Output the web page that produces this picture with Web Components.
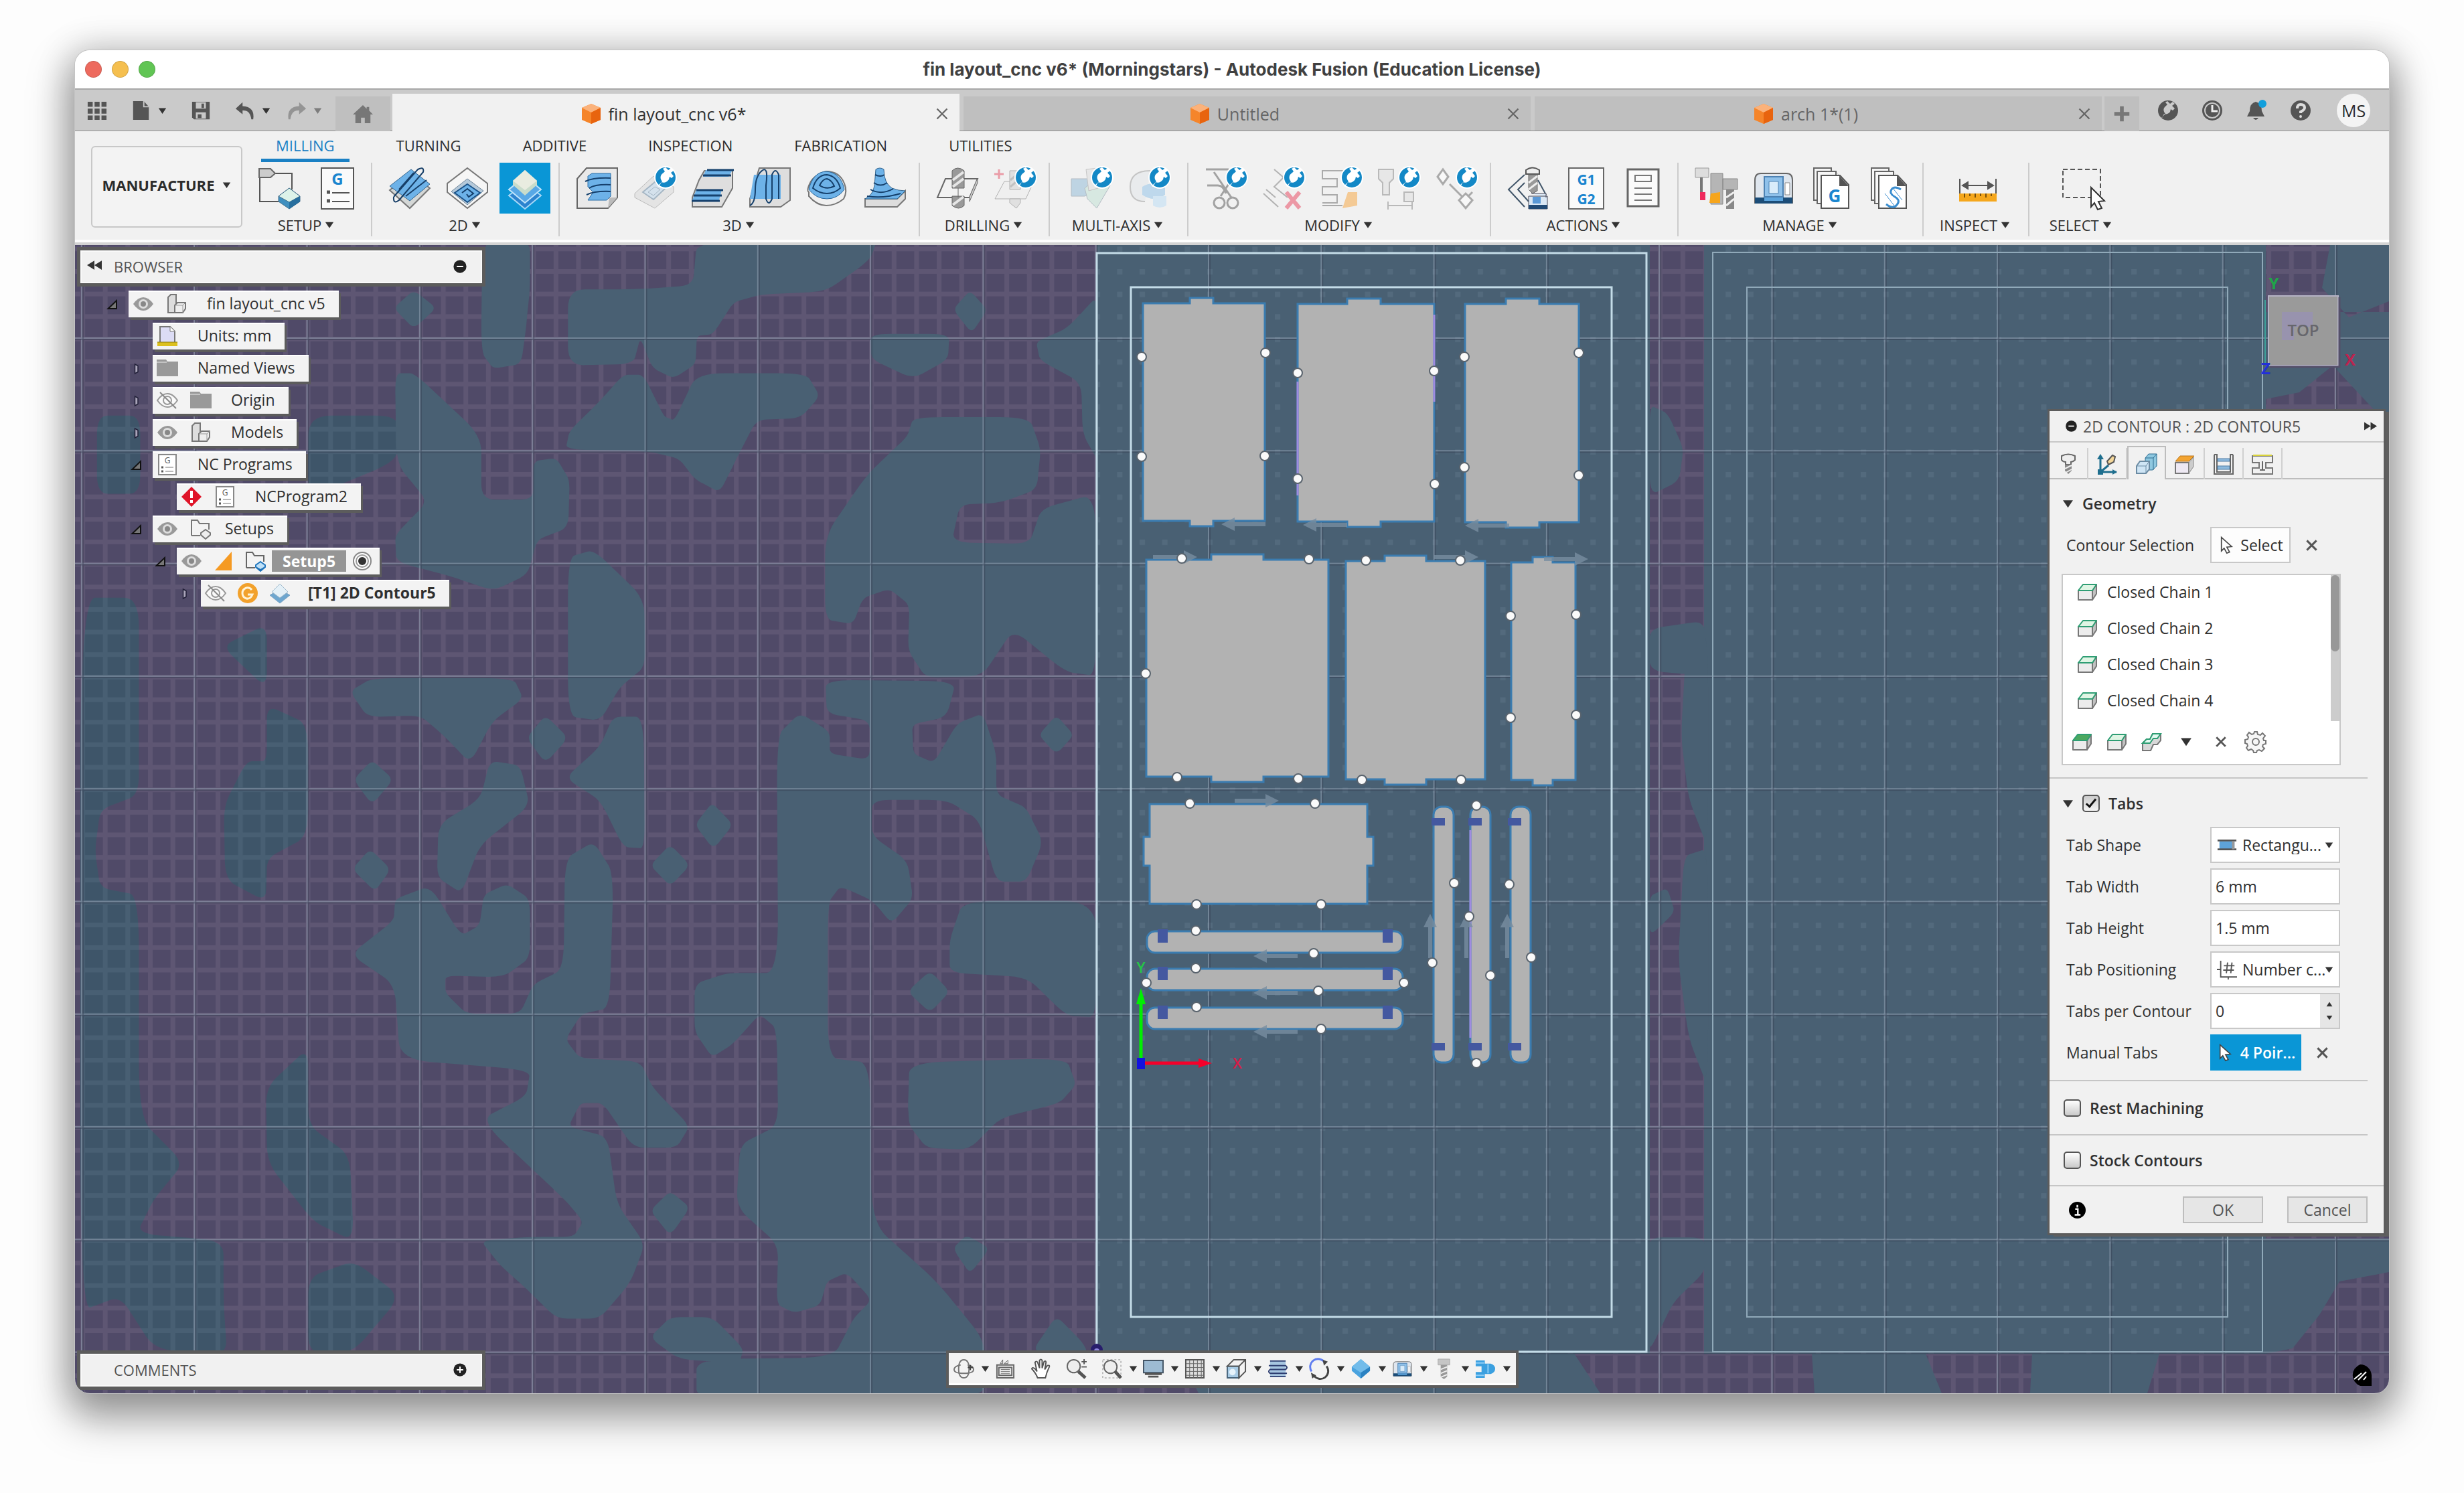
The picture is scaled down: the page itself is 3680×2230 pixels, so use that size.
<!DOCTYPE html>
<html lang="en">
<head>
<meta charset="utf-8">
<title>fin layout_cnc v6* (Morningstars) - Autodesk Fusion (Education License)</title>
<style>
    html, body {
        margin: 0;
        height: 100%;
    }
    body {
        background: #fdfdfd;
        font: 22px/28px "Open Sans", "Noto Sans", sans-serif;
        color: #2c2c2c;
    }
</style>
</head>
<body>
<fusion-app></fusion-app>

<script>
// the round plug badge that marks extension tools
const BADGE = `
    <circle cx="48" cy="16" r="17" fill="#fff"/>
    <circle cx="48" cy="16" r="15" fill="#1388c6"/>
    <path d="M36 29l7-7c-4-5-3-10 2-13l2-2-3-4 4-2 4 4 5-3 3 4-4 3 4 5-3 3-3-2-1 4c-3 4-7 6-11 4l-4 7z" fill="#fff"/>`;

const BOX = (top, body) => `
    <path d="M3 14h21v14H3z" fill="${body}" stroke="#777" stroke-width="2" stroke-linejoin="round"/>
    <path d="M24 14l6-9v14l-6 9z" fill="#c2c2c2" stroke="#777" stroke-width="2" stroke-linejoin="round"/>
    <path d="M3 14l7-9h20l-6 9z" fill="${top}" stroke="#2f9e74" stroke-width="2" stroke-linejoin="round"/>`;

const MACHINE = `
    <path d="M4 20q0-10 9-10h38q9 0 9 10v34H4z" fill="#dfe6ee" stroke="#666" stroke-width="2"/>
    <path d="M18 15h28v30H18z" fill="#8fc1ea" stroke="#4d82b3" stroke-width="2"/>
    <path d="M25 22h14v18H25z" fill="#d9ecfa" stroke="#4d82b3"/>
    <path d="M49 24h7v18h-7z" fill="#fff" stroke="#888"/>
    <path d="M4 46h56v9H4z" fill="#1c4d78"/>
    <path d="M18 46h28v5H18z" fill="#5ca4dd"/>`;

const PAGES = `
    <path d="M6 2h26v48H6z" fill="#f7f7f7" stroke="#666" stroke-width="2"/>
    <path d="M11 7h28v48H11z" fill="#f7f7f7" stroke="#666" stroke-width="2"/>
    <path d="M17 13h28l13 14v35H17z" fill="#fff" stroke="#555" stroke-width="2"/>
    <path d="M34 2l24 27H44V13z" fill="#555"/>`;

// name: [viewBox size, markup]
const ICONS = {
    setup: [64, `<path d="M14 10h36v24M2 14v38h28" fill="none" stroke="#555" stroke-width="2"/>
        <path d="M1 3h17l7 7-7 6H1z" fill="#ccc" stroke="#666" stroke-width="2"/>
        <path d="M46 32l16 12v8L46 63 30 52v-8z" fill="#3f8fbf" stroke="#44708c"/><path d="M46 32l16 12-16 9-16-9z" fill="#dcf3e9" stroke="#44708c"/><path d="M46 53l16-9v8L46 63z" fill="#276f9f"/>`],
    gdoc: [64, `<path d="M8 2h48v61H8z" fill="#fafafa" stroke="#555" stroke-width="2"/>
        <text x="32" y="27" font-size="24" font-weight="700" text-anchor="middle" fill="#1b86cf">G</text>
        <path d="M16 38h5M16 51h5" stroke="#555" stroke-width="5"/><path d="M24 39h26M24 52h26" stroke="#555" stroke-width="2"/>`],
    face: [64, `<path d="M2 35L34 10l28 22-30 30z" fill="#d4d7d6" stroke="#777" stroke-width="2"/>
        <path d="M2 29L34 4l28 22-30 25z" fill="#6db2e8" stroke="#33658e"/>
        <path d="M8 45L44 4q10-5 8 4L16 50q-9 7-8-5M16 34L38 9M26 44L57 20" fill="none" stroke="#173f68" stroke-width="2"/>`],
    adaptive2d: [64, `<path d="M32 2l30 23v13L32 62 2 38V25z" fill="#f6f6f6" stroke="#777" stroke-width="2"/>
        <path d="M32 18l24 18-24 21L8 37z" fill="#b5c9da" stroke="#6e8599"/>
        <path d="M32 26l19 13-19 14-19-14z" fill="#6db2e8" stroke="#1c548a" stroke-width="2"/><path d="M24 39l8-6 9 7-7 5-3-4" fill="none" stroke="#15406c" stroke-width="2"/>`],
    contour: [64, `<path d="M32 24l24 19-24 20L8 43z" fill="#2c83cf" stroke="#a6d7f6" stroke-width="2"/>
        <path d="M32 14l24 20-24 20L8 34z" fill="#58a8e6" stroke="#bfe4fb" stroke-width="2"/>
        <path d="M32 5l18 16v6L32 43 14 27v-6z" fill="#c9dccb"/><path d="M32 5l18 16-18 14-18-14z" fill="#e9ece0"/>`],
    adaptive3d: [64, `<path d="M2 18L16 2h46v44L48 62H2z" fill="#e9e9e9" stroke="#666" stroke-width="2"/><path d="M48 62l14-16H50z" fill="#bbb"/>
        <path d="M18 14l6-4h28v34l-6 6H18l8-12-8-8z" fill="#6db2e8" stroke="#2b6ea8"/>
        <path d="M14 22q12-6 38-5M20 32q9-6 32-5M16 42q12-6 36-5" fill="none" stroke="#15406c" stroke-width="2"/>`],
    pocket3d: [64, `<g opacity=".5"><path d="M2 40L30 14l30 16v8L32 62 2 46z" fill="#d8d8d8" stroke="#888"/><path d="M14 38l18-15 16 9-18 17z" fill="#b9d3e9" stroke="#5e7e9a" stroke-width="2"/><path d="M22 38l10-8 8 4-10 9z" fill="none" stroke="#5e7e9a"/></g>` + BADGE],
    parallel: [64, `<path d="M20 6h42v26L46 60H2V46l10-26z" fill="#dedede" stroke="#777" stroke-width="2"/><path d="M22 5h40l-6 10H18zM8 34h38l-4 16H2z" fill="#6db2e8"/>
        <path d="M24 5h40M18 13h42M8 35h40M4 43h42M1 51h42" stroke="#16416d" stroke-width="3"/>`],
    scallop: [64, `<path d="M16 2h46v48L48 60H2V48z" fill="#dedede" stroke="#777" stroke-width="2"/><path d="M8 12h40v36H2z" fill="#6db2e8"/>
        <path d="M2 58q8-4 8-24T20 6t6 22v20q4 12 9 0V12q5-12 10 0v36" fill="none" stroke="#15406c" stroke-width="2"/>`],
    spiral: [64, `<path d="M4 38q-4-2 2-14T30 7q20 0 27 18 5 12-1 23-12 10-26 10T4 44z" fill="#f0f0f0" stroke="#777" stroke-width="2"/>
        <path d="M4 34Q10 8 30 7q22 2 27 27-10 14-26 14T4 34z" fill="#6db2e8" stroke="#26679f"/>
        <path d="M10 32Q16 12 31 12q15 2 20 20-9 8-20 8t-21-8zM20 28q5-10 11-10 7 2 11 11-11 6-22-1z" fill="none" stroke="#15406c" stroke-width="2"/>`],
    morph: [64, `<path d="M2 60V48h48l12-12v12L50 60z" fill="#ddd" stroke="#777" stroke-width="2"/>
        <path d="M18 4q6-4 12 0 0 20 12 28 10 4 20 4L50 48H2q12-6 14-20z" fill="#6db2e8" stroke="#33658e"/>
        <path d="M17 12q8 4 14 0M15 24q10 7 20 0M10 34q16 9 34-1M5 44q24 4 50-4" fill="none" stroke="#15406c" stroke-width="2"/>`],
    drill: [64, `<path d="M14 18h48L50 46H2z" fill="#f2f2f2" stroke="#666" stroke-width="2"/><path d="M50 46v6l12-28v-6" fill="#ccc" stroke="#666"/>
        <path d="M24 6q8-8 18 0v26H24zM24 44h18v14q-8 8-18 0z" fill="#999" stroke="#666"/><path d="M25 20l16-12M25 30l16-12M25 57l16-12" stroke="#e6e6e6" stroke-width="4"/><path d="M33 32v14" stroke="#666"/>`],
    drillNew: [64, `<g opacity=".45"><path d="M16 22h44L48 48H2z" fill="#eee" stroke="#666"/><path d="M24 6h16v28H24zM24 48h16v6l-6 8-10-8z" fill="#ccc" stroke="#666"/><path d="M25 20l14-12M25 30l14-12" stroke="#888" stroke-width="3"/><path d="M8 4v14M1 11h14" stroke="#e2374f" stroke-width="3"/></g>` + BADGE],
    swarf: [64, `<g opacity=".5"><path d="M2 18h28v22l-8 4H2z" fill="#8db9d6" stroke="#789"/><path d="M22 32l24-20 14 16-20 34-14-14z" fill="#bfe0d2" stroke="#789"/><path d="M24 4l18-2v30l-14 4z" fill="#ddd" stroke="#999"/></g>` + BADGE],
    flow: [64, `<g opacity=".5"><path d="M34 6Q4 6 4 30q0 22 22 22" fill="#e3e7ea" stroke="#999" stroke-width="2"/><path d="M22 30q16-10 34 0v12q-16 12-34 0z" fill="#8cc0e8"/><path d="M38 44h20v14q-10 6-20 0z" fill="#b8dcf5"/></g>` + BADGE],
    trim: [64, `<g opacity=".5" fill="none" stroke="#555" stroke-width="3"><path d="M2 4h34M4 28h16q8 0 12 12M14 8L40 46M36 26L24 44"/><circle cx="22" cy="54" r="8"/><circle cx="42" cy="54" r="8"/></g>` + BADGE],
    remove: [64, `<g opacity=".5"><path d="M2 40l22 20M6 34l14 12M18 4l14 12-14 14 20 16" fill="none" stroke="#777" stroke-width="2"/><path d="M36 38l20 24M56 38L36 62" stroke="#e8415b" stroke-width="6"/></g>` + BADGE],
    replace: [64, `<g opacity=".5"><path d="M38 6H4v12h22v12H4v12h22v12H4M4 58h30" fill="none" stroke="#666" stroke-width="2"/><path d="M34 62l8-24h14v20z" fill="#f7a53c"/></g>` + BADGE],
    toolAxis: [64, `<g opacity=".45"><path d="M2 4h22v14l-6 6v18H8V24l-6-6zM40 38h14v14H40zM16 58h36M16 52v12M52 52v12" fill="#ddd" stroke="#777" stroke-width="2"/></g>` + BADGE],
    links: [64, `<g opacity=".5" fill="#fff" stroke="#666" stroke-width="3"><path d="M12 4l8 11-8 11-8-11zM46 40l10 10-10 12-10-12zM22 26l18 18M56 38l-6 6"/></g>` + BADGE],
    simulate: [64, `<path d="M26 12L2 34l24 26M26 24L16 34l16 18M46 20l12 22" fill="none" stroke="#42566a" stroke-width="2"/><path d="M28 5q10-7 20 0v6H28z" fill="#eee" stroke="#555" stroke-width="2"/><path d="M32 12h13v24l-7 4-6-6z" fill="#999" stroke="#666"/><path d="M32 24l13-10M32 34l13-10" stroke="#eee" stroke-width="3"/>
        <path d="M32 44h28v19H32zM36 40h22v6" fill="#dbe8f5" stroke="#445"/><path d="M38 45h12v10H38z" fill="#5a98d6"/><path d="M32 57h28v6H32z" fill="#224a75"/>`],
    post: [64, `<path d="M6 2h52v61H6z" fill="#fafafa" stroke="#666" stroke-width="2"/><g font-size="21" font-weight="700" text-anchor="middle" fill="#1b86cf"><text x="32" y="27">G1</text><text x="32" y="56">G2</text></g>`],
    sheet: [64, `<path d="M8 4h46v55H8z" fill="#fafafa" stroke="#666" stroke-width="3"/><path d="M19 13h24v9H19zM18 32h26M18 41h26M18 50h26" fill="none" stroke="#777" stroke-width="2"/>`],
    tools: [64, `<path d="M1 2h20v14H1z" fill="#ddd" stroke="#999"/><path d="M24 10h18v46H24zM42 18h22v16H42z" fill="#b5b5b5" stroke="#888"/><path d="M10 16v28" stroke="#777" stroke-width="4"/><path d="M8 38h8v12H8z" fill="#ef2a5d"/><path d="M24 40l14-2v16H22z" fill="#f6a51c"/><path d="M47 34h12v29H47z" fill="#888"/><path d="M47 46l12-8M47 58l12-10" stroke="#eee" stroke-width="3"/>`],
    machine: [64, MACHINE],
    ncdocs: [64, PAGES + `<text x="37" y="53" font-size="26" font-weight="700" text-anchor="middle" fill="#1b86cf">G</text>`],
    templates: [64, PAGES + `<path d="M50 34q-10-6-14 0t5 11 3 12-16-1" fill="none" stroke="#3b8ed0" stroke-width="3"/><path d="M26 40l14 18M38 32l14 18" stroke="#3b8ed0"/>`],
    measure: [64, `<path d="M5 18v22M59 18v22M9 28h46M9 28l8-5v10zM55 28l-8-5v10z" fill="#555" stroke="#555" stroke-width="2"/><path d="M4 40h56v12H4z" fill="#f5a71d"/><path d="M12 40v6M20 40v4M28 40v6M36 40v4M44 40v6M52 40v4" stroke="#79500a" stroke-width="2"/>`],
    select: [64, `<path d="M2 4h56v42H2z" fill="none" stroke="#555" stroke-width="2" stroke-dasharray="7 4"/><path d="M44 31l20 20-9 1 5 10-6 2-5-10-5 6z" fill="#fff" stroke="#333" stroke-width="2"/>`],

    grid: [32, `<path d="M1 2h8v8H1zM12 2h8v8h-8zM23 2h8v8h-8zM1 13h8v8H1zM12 13h8v8h-8zM23 13h8v8h-8zM1 24h8v7H1zM12 24h8v7h-8zM23 24h8v7h-8z" fill="#555"/>`],
    file: [32, `<path d="M3 1h17l8 9v21H3z" fill="#555"/><path d="M20 1v9h8" fill="none" stroke="#c8c8c8" stroke-width="2"/>`],
    save: [32, `<path d="M2 2h28v28H5l-3-3z" fill="#555"/><path d="M8 3h16v10H8zM8 19h16v10H8z" fill="#c8c8c8"/><path d="M17 5h4v7h-4zM11 22h6v6h-6z" fill="#555"/>`],
    undo: [32, `<path d="M12 3L1 13l11 9v-6q12-1 14 14h3Q32 10 12 9z" fill="#555"/>`],
    redo: [32, `<path d="M20 3l11 10-11 9v-6Q8 15 6 30H3Q0 10 20 9z" fill="#949494"/>`],
    home: [32, `<path d="M16 2L0 17h4v14h9v-9h6v9h9V17h4l-6-6V5h-4v3z" fill="#777"/>`],
    cube: [32, `<path d="M16 1l14 6v18l-14 6-14-6V7z" fill="#f5852a"/><path d="M16 1l14 6-14 7L2 7z" fill="#fbb27b"/><path d="M16 14l14-7v18l-14 6z" fill="#e8640f"/>`],
    plus: [32, `<path d="M16 4v24M4 16h24" stroke="#777" stroke-width="6"/>`],
    plug: [32, `<circle cx="16" cy="16" r="15" fill="#555"/><path d="M5 28l7-7c-4-5-3-9 1-12l2-2-3-3 3-2 4 4 4-3 3 3-4 3 4 4-3 3-3-2-1 4c-2 3-6 4-9 3l-3 6z" fill="#cacaca"/>`],
    clock: [32, `<circle cx="16" cy="16" r="15" fill="#555"/><circle cx="16" cy="16" r="11" fill="none" stroke="#c8c8c8" stroke-width="2"/><path d="M16 8v9h8" fill="none" stroke="#eee" stroke-width="3"/>`],
    bell: [32, `<path d="M15 3q9 2 9 14l4 8H2l4-8Q6 5 15 3zM11 27h8q-4 6-8 0z" fill="#555"/><circle cx="25" cy="6" r="6" fill="#119fdc"/>`],
    help: [32, `<circle cx="16" cy="16" r="15" fill="#555"/><path d="M11 13q0-6 5-6 6 0 6 5 0 3-6 6v2" fill="none" stroke="#ddd" stroke-width="4"/><circle cx="16" cy="25" r="2" fill="#ddd"/>`],
    close: [32, `<path d="M4 4l24 24M28 4L4 28" stroke="#555" stroke-width="5"/>`],
    thinClose: [32, `<path d="M6 6l20 20M26 6L6 26" stroke="#666" stroke-width="3"/>`],
    caret: [32, `<path d="M2 6h28L16 27z" fill="#333"/>`],

    eye: [32, `<path d="M1 16Q8 6 16 6t15 10q-7 10-15 10T1 16z" fill="#999"/><circle cx="16" cy="16" r="7" fill="#ddd"/><circle cx="16" cy="16" r="4" fill="#888"/>`],
    eyeOff: [32, `<path d="M1 16Q8 6 16 6t15 10q-7 10-15 10T1 16z" fill="#fafafa" stroke="#999" stroke-width="2"/><circle cx="16" cy="16" r="6" fill="none" stroke="#999" stroke-width="2"/><path d="M5 4l24 24" stroke="#888" stroke-width="2"/>`],
    part: [32, `<path d="M3 6l4-4h8v14l-2 13H3z" fill="#ddd" stroke="#777" stroke-width="2"/><path d="M13 18l4-4h12v9l-4 6H13z" fill="#eee" stroke="#777" stroke-width="2"/><path d="M13 18h12l4-4M25 18v11" fill="none" stroke="#999"/>`],
    units: [32, `<path d="M5 2h15l7 7v18H5z" fill="#dcdcf5" stroke="#777" stroke-width="2"/><path d="M20 2v7h7" fill="#fff" stroke="#777"/><path d="M1 25h30v6H1z" fill="#dcc01e"/><path d="M1 25h30" stroke="#8a7a12"/>`],
    folder: [32, `<path d="M0 3h14l2 3h16v22H0z" fill="#999"/><path d="M0 7h15" stroke="#eee"/>`],
    ncprog: [32, `<path d="M3 1h26v30H3z" fill="#fff" stroke="#888" stroke-width="2"/><text x="16" y="14" font-size="12" text-anchor="middle" fill="#555">G</text><path d="M7 20h3M7 26h3" stroke="#555" stroke-width="3"/><path d="M13 20h12M13 26h12" stroke="#777"/>`],
    error: [32, `<path d="M16 1l15 15-15 15L1 16z" fill="#df1428"/><path d="M16 7v11M16 21v4" stroke="#fff" stroke-width="4"/>`],
    setups: [32, `<path d="M2 26V3h9l3 5h14v9M2 26h13" fill="none" stroke="#777" stroke-width="2"/><path d="M23 17l7 5v3l-7 6-7-6v-3z" fill="#eee" stroke="#777" stroke-width="2"/>`],
    setupOn: [32, `<path d="M2 26V3h9l3 5h14v9M2 26h13" fill="none" stroke="#666" stroke-width="2"/><path d="M23 17l7 5v3l-7 6-7-6v-3z" fill="#bfe0f7" stroke="#2176bd" stroke-width="2"/><path d="M16 24l7 4 7-4-7 7z" fill="#1d6fb5"/>`],
    wedge: [32, `<path d="M28 2v28H3z" fill="#f59a23"/>`],
    target: [32, `<circle cx="16" cy="16" r="13" fill="#fff" stroke="#888" stroke-width="2"/><circle cx="16" cy="16" r="9" fill="none" stroke="#999" stroke-width="2"/><circle cx="16" cy="16" r="6" fill="#333"/>`],
    regen: [32, `<circle cx="16" cy="16" r="15" fill="#f2a12b"/><path d="M22 11q-3-4-8-3-6 2-6 8t6 8q6 1 9-6h-7" fill="none" stroke="#fff3d6" stroke-width="3"/>`],
    layers: [32, `<path d="M16 10l15 9-15 12L1 19z" fill="#6ea6cf" stroke="#7fa5c2"/><path d="M16 2l12 12-12 9L4 14z" fill="#e4f0f7" stroke="#9fb9ca"/>`],
    minusDot: [32, `<circle cx="16" cy="16" r="14" fill="#222"/><path d="M9 16h14" stroke="#fff" stroke-width="3"/>`],
    plusDot: [32, `<circle cx="16" cy="16" r="14" fill="#222"/><path d="M9 16h14M16 9v14" stroke="#fff" stroke-width="3"/>`],
    info: [32, `<circle cx="16" cy="16" r="16" fill="#000"/><path d="M16 6v5M12 14h5v11M11 25h11" fill="none" stroke="#fff" stroke-width="3"/>`],
    rewind: [32, `<path d="M16 6v20L0 16zM32 6v20L16 16z" fill="#333"/>`],
    forward: [32, `<path d="M0 6v20l16-10zM16 6v20l16-10z" fill="#333"/>`],
    open: [32, `<path d="M28 4v24H3z" fill="#777" stroke="#111" stroke-width="4"/>`],
    shut: [32, `<path d="M11 2l9 5v18l-9 5z" fill="#aaa5ba" stroke="#222038" stroke-width="3"/>`],

    bolt: [32, `<path d="M6 4q10-5 20 0v6q-3 3-6 3v4H12v-4q-4 0-6-3z" fill="#eee" stroke="#666" stroke-width="2"/><path d="M11 17h10v9l-5 5-5-5z" fill="#888"/><path d="M11 23l10-5M12 29l9-5" stroke="#eee" stroke-width="2"/>`],
    axis: [32, `<path d="M6 28V6M6 28h24M6 28l12-10" fill="none" stroke="#1e6e8e" stroke-width="3"/><path d="M6 1L1 9h10zM31 28l-7-4v8zM2 24h8v8H2z" fill="#1e6e8e"/><path d="M16 12l8-9 4 2-2 8-8 4z" fill="#f4d79a" stroke="#555" stroke-width="2"/>`],
    solids: [32, `<path d="M14 8l5-6h12v18l-6 6H14z" fill="#8ec8e0" stroke="#2c6c90"/><path d="M14 8h12l5-6M26 8v18" fill="none" stroke="#2c6c90"/><path d="M1 20l5-7h14v12l-5 6H1z" fill="#cfe5f5" stroke="#6b8ba3" stroke-width="2"/><path d="M1 20h14v11M15 20l5-7" fill="none" stroke="#6b8ba3"/>`],
    heights: [32, `<path d="M2 14h20v16H2z" fill="#eee9f3" stroke="#777" stroke-width="2"/><path d="M22 14l7-8v14l-7 10z" fill="#ccc" stroke="#888"/><path d="M2 12l7-8h21l-8 8z" fill="#f3a431" stroke="#b6731a"/>`],
    passes: [32, `<path d="M2 2h4v26h20V2h4M2 2v29h28V2" fill="none" stroke="#666" stroke-width="2"/><path d="M7 8h18v4H7zM7 19h18v5H7z" fill="#8cb9dd" stroke="#4d7ba3"/>`],
    linking: [32, `<path d="M1 4h30v10H21v8h10v9H1v-9h10v-8H1z" fill="none" stroke="#777" stroke-width="2"/><path d="M2 3h28" stroke="#d9d238" stroke-width="2"/><path d="M16 12v12M12 25h8" stroke="#666" stroke-width="2"/>`],
    pointer: [32, `<path d="M7 2l19 17-9 1 5 9-5 2-5-9-5 5z" fill="#fff" stroke="#444" stroke-width="2"/>`],
    chain: [32, BOX('#dff5e4', '#ececec')],
    pocket: [32, BOX('#4ba860', '#ececec')],
    chains: [32, `<path d="M3 18l6-6h5l4-8h12v10l-5 6h-6l-4 9H3z" fill="#d8d8d8" stroke="#777" stroke-width="2"/><path d="M3 18l6-6h5l4-8h12l-5 7h-6l-5 7z" fill="#e3faf1" stroke="#2f9e74" stroke-width="2"/>`],
    gear: [32, `<path d="M14 1h4l1 4 4 1 3-3 4 4-3 4 1 3h3v5l-4 1-1 3 3 3-4 4-4-2-3 1-1 3h-4l-1-3-3-2-4 2-3-4 2-3-1-3-3-1v-5l4-1 1-3-2-3 3-4 4 3 3-1z" fill="#f6f6f6" stroke="#777" stroke-width="2"/><circle cx="16" cy="16" r="5" fill="none" stroke="#777" stroke-width="2"/>`],
    rectTab: [32, `<path d="M4 10h24v13H4z" fill="#5ea3d9"/><path d="M1 9h30M1 23h30" stroke="#555" stroke-width="3"/><path d="M24 10h4v13h-4z" fill="#999"/>`],
    count: [32, `<path d="M6 2v26h26M0 16h6M18 28v4" fill="none" stroke="#555" stroke-width="2"/><path d="M17 5l-2 17M24 5l-2 17M11 10h17M10 17h17" stroke="#555" stroke-width="2"/>`],

    orbit: [32, `<path d="M16 2q8 0 8 14t-8 14-8-14 8-14z" fill="none" stroke="#777" stroke-width="2"/><path d="M22 10q9 2 9 7 0 6-15 6T1 17q0-5 10-7" fill="none" stroke="#777" stroke-width="2"/><path d="M22 14h8M26 10v8" stroke="#444" stroke-width="2"/>`],
    lookAt: [32, `<path d="M3 10h26v20H3zM6 14h20v12H6z" fill="#eee" stroke="#666" stroke-width="2"/><path d="M9 17h14M9 20h14M9 23h14" stroke="#777"/><path d="M8 8l4-6v6zM14 8l6-5v5z" fill="#eee" stroke="#666"/>`],
    pan: [32, `<path d="M11 30Q8 22 2 16q1-3 5 0l3 4L7 6q2-3 4 0l3 9V3q2-3 4 0v12l3-10q3-2 3 1l-2 11 4-6q4-1 3 2-4 8-6 17z" fill="#fff" stroke="#555" stroke-width="2"/>`],
    zoom: [32, `<circle cx="12" cy="12" r="10" fill="#eee" stroke="#666" stroke-width="2"/><path d="M19 20l11 10" stroke="#555" stroke-width="5"/><path d="M24 5h8M28 1v8M24 13h8" stroke="#555" stroke-width="2"/>`],
    fit: [32, `<path d="M2 2h28v28H2z" fill="none" stroke="#888" stroke-dasharray="3 3"/><circle cx="14" cy="13" r="10" fill="#eee" stroke="#666" stroke-width="2"/><path d="M21 20l9 10" stroke="#555" stroke-width="5"/>`],
    display: [32, `<path d="M1 3h30v19H1z" fill="#9dbbd3" stroke="#456" stroke-width="2"/><path d="M3 24h26M8 28h16" stroke="#555" stroke-width="3"/>`],
    gridSet: [32, `<path d="M2 2h28v28H2z" fill="#ddd" stroke="#555" stroke-width="2"/><path d="M2 8h28M2 14h28M2 20h28M2 26h28M8 2v28M14 2v28M20 2v28M26 2v28" stroke="#666"/>`],
    views: [32, `<path d="M2 12h18v18H2z" fill="#a8cbe5" stroke="#47637a" stroke-width="2"/><path d="M2 12L12 2h18v18L20 30V12zM20 12L30 2" fill="none" stroke="#555" stroke-width="2"/><circle cx="10" cy="21" r="5" fill="#e6f3fb"/>`],
    path: [32, `<path d="M4 3h24v26H4z" fill="#a6c5e0"/><path d="M4 4h24M2 11h26q4 3 0 6H4q-4 3 0 6h26M4 28h24" fill="none" stroke="#2d3d70" stroke-width="2"/>`],
    cycle: [32, `<path d="M4 20A12 12 0 0 1 24 6" fill="none" stroke="#5f7df0" stroke-width="3"/><path d="M27 12A12 12 0 0 1 8 27" fill="none" stroke="#444" stroke-width="3"/><path d="M21 2l8 3-6 6zM3 22l2 9 6-5z" fill="#444"/>`],
    stock: [32, `<path d="M16 1l14 12v6L16 31 2 19v-6z" fill="#4aa3df"/><path d="M16 1l14 12-14 9L2 13z" fill="#72bcea"/><path d="M16 22l14-9v6L16 31z" fill="#2b82c2"/>`],
    screw: [32, `<path d="M7 1h18v9H7z" fill="#c5c5c5" stroke="#aaa"/><path d="M11 10h10v18l-5 4-5-4z" fill="#999"/><path d="M11 17l10-4M11 23l10-4M11 29l10-4" stroke="#eee" stroke-width="2"/>`],
    holder: [32, `<path d="M1 3h14v5h9q7 2 7 8t-7 8h-9v6H1v-9h9v-9H1z" fill="#3ba0e0"/><path d="M1 7h13M1 26h13M20 9v14" stroke="#8fcdf5" stroke-width="2"/>`]
};

class FxIcon extends HTMLElement {
    constructor() {
        super();
        this.attachShadow({ mode: 'open' });
    }

    connectedCallback() {
        const [size, markup] = ICONS[this.getAttribute('name')];
        this.shadowRoot.innerHTML = `
            <style>
                :host { display: block; flex: none; width: var(--icon, 32px); height: var(--icon, 32px); }
                svg { display: block; width: 100%; height: 100%; overflow: visible; }
            </style>
            <svg viewBox="0 0 ${size} ${size}" aria-hidden="true">${markup}</svg>
        `;
    }
}

class TitleBar extends HTMLElement {
    constructor() {
        super();
        this.attachShadow({ mode: 'open' });
        this.shadowRoot.innerHTML = `
            <style>
                :host {
                    display: grid;
                    grid-template-columns: 1fr auto 1fr;
                    align-items: center;
                    height: 57px;
                    background: #fff;
                    border-bottom: 2px solid #a8a8a8;
                    font: 700 26px/30px Inter, sans-serif;
                    color: #404040;
                }
                .lights { display: flex; gap: 15px; padding-left: 15px; }
                .lights button { width: 25px; height: 25px; padding: 0; border: 1px solid rgba(0, 0, 0, .15); border-radius: 50%; }
                .red { background: #ed6a5e; }
                .yellow { background: #f5bf4f; }
                .green { background: #61c554; }
            </style>
            <div class="lights">
                <button class="red" aria-label="Close"></button>
                <button class="yellow" aria-label="Minimise"></button>
                <button class="green" aria-label="Zoom"></button>
            </div>
            <slot></slot>
        `;
    }
}

class DocBar extends HTMLElement {
    constructor() {
        super();
        this.attachShadow({ mode: 'open' });
        const tab = (title, cls) => `
            <div class="tab ${cls}">
                <button class="name"><fx-icon name="cube"></fx-icon>${title}</button>
                <button class="x" aria-label="Close ${title}"><fx-icon name="thinClose"></fx-icon></button>
            </div>`;
        this.shadowRoot.innerHTML = `
            <style>
                :host { display: flex; align-items: stretch; height: 62px; background: #cacaca; box-shadow: inset 0 -2px #b0b0b0; }
                button { display: flex; align-items: center; padding: 0; border: 0; background: none; font: inherit; color: inherit; }
                .quick { display: flex; align-items: center; gap: 36px; padding: 0 20px 0 18px; --icon: 30px; }
                .quick button { gap: 10px; }
                .history { display: flex; gap: 24px; }
                .small { --icon: 13px; }
                .dim { opacity: .5; }
                .home, .add { display: flex; align-items: center; justify-content: center; margin-top: 10px; background: #bfbfbf; --icon: 30px; }
                .home { width: 82px; margin-right: 3px; }
                .add { width: 52px; margin-left: 4px; }
                .tabs { display: flex; flex: 1; gap: 6px; }
                .tab { flex: 1; display: flex; margin-top: 10px; padding-right: 14px; background: #bfbfbf; box-shadow: inset 0 -2px #a8a8a8; color: #666; font-size: 25px; --icon: 32px; }
                .tab.active { margin-top: 6px; padding-top: 4px; background: #f1f1f1; box-shadow: none; color: #333; }
                .name { flex: 1; justify-content: center; gap: 10px; }
                .x { --icon: 24px; }
                .right { display: flex; align-items: center; gap: 34px; padding: 0 28px 0 27px; --icon: 32px; }
                .user { justify-content: center; width: 50px; height: 50px; border-radius: 50%; background: #f4f4f4; font-size: 25px; margin-left: 4px; }
            </style>
            <div class="quick">
                <button aria-label="Data panel"><fx-icon name="grid"></fx-icon></button>
                <button aria-label="File"><fx-icon name="file"></fx-icon><fx-icon class="small" name="caret"></fx-icon></button>
                <button aria-label="Save"><fx-icon name="save"></fx-icon></button>
                <div class="history">
                    <button aria-label="Undo"><fx-icon name="undo"></fx-icon><fx-icon class="small" name="caret"></fx-icon></button>
                    <button aria-label="Redo"><fx-icon name="redo"></fx-icon><fx-icon class="small dim" name="caret"></fx-icon></button>
                </div>
            </div>
            <button class="home" aria-label="Home"><fx-icon name="home"></fx-icon></button>
            <div class="tabs">
                ${tab('fin layout_cnc v6*', 'active')}
                ${tab('Untitled', '')}
                ${tab('arch 1*(1)', '')}
            </div>
            <button class="add" aria-label="New design"><fx-icon name="plus"></fx-icon></button>
            <div class="right">
                <button aria-label="Extensions"><fx-icon name="plug"></fx-icon></button>
                <button aria-label="Job status"><fx-icon name="clock"></fx-icon></button>
                <button aria-label="Notifications"><fx-icon name="bell"></fx-icon></button>
                <button aria-label="Help"><fx-icon name="help"></fx-icon></button>
                <button class="user">MS</button>
            </div>
        `;
    }
}

class RibbonGroup extends HTMLElement {
    constructor() {
        super();
        this.attachShadow({ mode: 'open' });
    }

    connectedCallback() {
        const tools = this.getAttribute('tools').split(' ');
        const active = this.getAttribute('active');
        this.shadowRoot.innerHTML = `
            <style>
                :host { display: flex; flex-direction: column; align-items: center; box-sizing: border-box; padding: 0 12px 0 18px; border-right: 2px solid #ccc; --icon: 64px; }
                :host([roomy]) { min-width: 155px; padding: 0 19px 0 24px; }
                :host(:last-of-type) { border-right: 0; }
                .tools { display: flex; gap: 10px; }
                button { border: 0; padding: 0; background: none; font: inherit; color: inherit; }
                .tool { width: 76px; height: 76px; padding: 6px; }
                .tool.active { background: #0a96d6; }
                .label { display: flex; align-items: center; gap: 5px; height: 38px; margin-right: 8px; --icon: 14px; }
            </style>
            <div class="tools">
                ${tools.map(name => `<button class="tool ${name === active ? 'active' : ''}" aria-label="${name}"><fx-icon name="${name}"></fx-icon></button>`).join('')}
            </div>
            <button class="label"><slot></slot><fx-icon name="caret"></fx-icon></button>
        `;
    }
}

class RibbonBar extends HTMLElement {
    constructor() {
        super();
        this.attachShadow({ mode: 'open' });
        const tabs = ['MILLING', 'TURNING', 'ADDITIVE', 'INSPECTION', 'FABRICATION', 'UTILITIES'];
        this.shadowRoot.innerHTML = `
            <style>
                :host { display: flex; height: 166px; background: #f1f1f1; border-bottom: 4px solid #d4d4d4; box-shadow: inset 0 -4px #fff; overflow: hidden; }
                button { font: inherit; color: inherit; }
                .workspace { display: flex; align-items: center; justify-content: center; gap: 12px; box-sizing: border-box; width: 226px; height: 122px; margin: 22px 0 0 24px; padding: 0 0 6px; border: 2px solid #c8c8c8; border-radius: 6px; background: #f3f3f3; font-weight: 700; --icon: 13px; }
                .tabs { display: flex; gap: 48px; padding: 6px 0 0 28px; }
                .tabs button { height: 40px; padding: 0 22px 5px; border: 0; border-bottom: 5px solid transparent; background: none; }
                .tabs .active { border-color: #1a80c4; color: #1a80c4; }
                .groups { display: flex; margin-top: 1px; height: 110px; }
            </style>
            <button class="workspace">MANUFACTURE <fx-icon name="caret"></fx-icon></button>
            <div>
                <div class="tabs">${tabs.map((t, i) => `<button class="${i === 0 ? 'active' : ''}">${t}</button>`).join('')}</div>
                <div class="groups">
                    <ribbon-group tools="setup gdoc">SETUP</ribbon-group>
                    <ribbon-group tools="face adaptive2d contour" active="contour">2D</ribbon-group>
                    <ribbon-group tools="adaptive3d pocket3d parallel scallop spiral morph">3D</ribbon-group>
                    <ribbon-group tools="drill drillNew">DRILLING</ribbon-group>
                    <ribbon-group tools="swarf flow" roomy>MULTI-AXIS</ribbon-group>
                    <ribbon-group tools="trim remove replace toolAxis links">MODIFY</ribbon-group>
                    <ribbon-group tools="simulate post sheet">ACTIONS</ribbon-group>
                    <ribbon-group tools="tools machine ncdocs templates">MANAGE</ribbon-group>
                    <ribbon-group tools="measure" roomy>INSPECT</ribbon-group>
                    <ribbon-group tools="select" roomy>SELECT</ribbon-group>
                </div>
            </div>
        `;
    }
}

// uncut islands of the solid, drawn with rounded corners between the points
const ISLANDS = [
    '623,0 695,0 695,60 690,110 682,165 640,172 622,150',
    '752,65 850,65 940,60 945,0 1215,0 1205,25 1140,68 1040,72 1000,82 970,125 945,128 944,165 910,185 878,170 860,130 850,165 752,168',
    '490,90 520,66 555,90 520,118', '1330,92 1355,66 1382,92 1358,124',
    '1205,125 1325,125 1322,160 1270,185 1208,160',
    '1455,135 1500,118 1550,70 1550,300 1525,260 1522,190 1460,160',
    '492,178 522,178 622,262 622,348 700,348 700,296 735,292 755,322 752,386 705,402 692,448 640,470 580,452 495,432 492,395 542,350 495,300',
    '748,280 755,255 800,215 835,180 865,180 895,235 912,242 945,178 1110,178 1130,208 1100,238 1035,240 1005,292 980,338 945,322 918,292 870,283',
    '1138,510 1138,395 1205,310 1260,265 1270,237 1445,237 1462,282 1455,335 1400,352 1340,355 1328,405 1445,408 1462,360 1545,340 1545,585 1500,580 1420,522 1375,585 1290,588 1262,550 1265,490 1235,468 1195,480 1180,515',
    '752,425 790,415 866,480 868,572 830,600 800,645 752,640',
    '425,605 460,588 670,588 685,615 640,645 605,702 565,665 530,638 450,640',
    '430,725 458,698 490,725 458,758', '428,845 455,818 486,845 462,875', '690,668 718,638 752,668 718,702',
    '942,785 968,755 1000,785 970,818', '875,840 905,812 935,840 905,868', '875,1305 905,1278 935,1300 905,1338',
    '1262,1010 1295,982 1325,1010 1295,1038', '1458,665 1485,638 1512,665 1485,690', '1330,1355 1350,1338 1385,1355 1355,1390',
    '748,722 800,680 820,640 865,640 868,818 835,815 800,752',
    '558,785 620,750 635,700 680,705 695,760 620,812 592,878 555,855',
    '748,830 790,808 820,850 815,1032 772,1040 748,1075 770,1100 860,1104 880,1140 935,1190 915,1220 850,1220 805,1160 770,1160 752,1192 812,1205 825,1295 868,1350 845,1402 800,1450 735,1450 690,1410 650,1378 620,1345 700,1340 760,1340 775,1320 745,1288 620,1182 690,1150 695,1115 500,1102 492,1000 425,960 490,915 492,885 545,868 592,935 620,920 625,880 660,865 695,885 695,965 655,990 568,988 568,1012 600,1040 680,1040 700,1000 745,980',
    '1065,665 1100,635 1145,660 1145,690 1205,698 1205,645 1140,635 1138,590 1335,592 1320,640 1268,650 1270,690 1302,702 1335,650 1375,635 1395,690 1395,745 1440,762 1465,808 1440,862 1395,862 1370,780 1320,752 1208,752 1208,800 1262,835 1270,885 1238,918 1210,888 1160,868 1142,890 1142,1100 1205,1105 1208,1322 1300,1395 1378,1480 1378,1560 945,1560 945,1505 1150,1502 1180,1450 1208,1425 1170,1388 1140,1400 1130,1432 1090,1442 1065,1430 1068,1350 1005,1300 1010,1215 1068,1190 1065,1060 1040,1040 1000,1080 968,1098 942,1065 942,1000 990,985 1068,985',
    '1325,985 1325,940 1345,888 1545,888 1545,1045 1500,1042 1440,990',
    '1262,1165 1265,1105 1500,1100 1515,1135 1490,1160 1400,1180 1355,1222 1290,1220 1265,1190',
    '875,1475 905,1448 970,1448 1015,1490 1010,1510 920,1505', '1448,1495 1485,1445 1530,1488 1530,1510'
];

const DARK_ISLANDS = [
    '20,480 108,480 108,640 108,745 50,765 42,820 50,870 108,880 108,1180 175,1240 130,1290 105,1335 235,1345 235,1420 240,1500 130,1490 80,1420 20,1440',
    '45,235 110,235 110,340 45,340', '235,760 270,700 300,700 300,625 362,650 362,800 300,830 298,888 238,860',
    '232,545 300,515 300,602', '298,1140 362,1085 362,1190 425,1230 430,1345 370,1320 300,1240',
    '362,235 497,235 497,295 362,345', '362,1395 430,1372 500,1420 430,1495 362,1495'
];

// clearing islands seen right of and below the boards
const EAST_ISLANDS = [
    '78,205 110,215 140,260 132,300 78,318', '78,485 180,475 180,545 78,538', '145,500 185,490 185,760 150,700 135,620',
    '78,820 110,810 125,840 78,870', '140,770 185,760 185,1060 150,1000 130,900',
    '70,1248 180,1248 180,1290 120,1330 78,1390 70,1360'
];

const smooth = list => list.map(text => {
    const points = text.split(' ').map(pair => pair.split(',').map(Number));
    const lerp = (a, b, t) => [a[0] + (b[0] - a[0]) * t, a[1] + (b[1] - a[1]) * t].map(Math.round);
    const parts = points.map((p, i) => {
        const prev = points[(i + points.length - 1) % points.length];
        const next = points[(i + 1) % points.length];
        return `${i ? 'L' : 'M'}${lerp(p, prev, .25)}Q${p} ${lerp(p, next, .25)}`;
    });
    return parts.join('') + 'z';
}).join('');

// parts as [left, top, right, bottom, tab left, tab right, tab height]
const PARTS = [
    [1707, 453, 1889, 778, 1777, 1812, 8],
    [1938, 454, 2142, 779, 2012, 2062, 8],
    [2188, 454, 2358, 780, 2249, 2299, 8],
    [1712, 836, 1984, 1160, 1809, 1887, 8],
    [2010, 838, 2218, 1164, 2068, 2130, 8],
    [2257, 840, 2353, 1165, 2289, 2319, 8]
];

const HANDLES = [
    [1705, 533], [1890, 527], [1705, 682], [1889, 681], [1938, 557], [2142, 554], [1938, 715], [2143, 723],
    [2187, 533], [2358, 527], [2187, 698], [2358, 710], [1765, 834], [1955, 835], [1711, 1006], [1758, 1161],
    [1939, 1163], [2040, 837], [2181, 837], [2034, 1165], [2182, 1165], [2256, 920], [2354, 918], [2256, 1072],
    [2354, 1068], [1777, 1200], [1964, 1200], [1787, 1351], [1973, 1351], [1786, 1390], [1962, 1424], [1786, 1446],
    [1712, 1468], [2097, 1468], [1969, 1480], [1787, 1504], [1973, 1537], [2172, 1319], [2139, 1438], [2205, 1203],
    [2194, 1369], [2226, 1457], [2205, 1588], [2254, 1321], [2287, 1430]
];

// arrow tips with direction in degrees
const ARROWS = [
    [1824, 783, 180], [1946, 784, 180], [2188, 785, 180], [1788, 832, 0], [2208, 832, 0], [2372, 835, 0], [1910, 1196, 0],
    [1872, 1428, 180], [1872, 1483, 180], [1872, 1541, 180], [2136, 1365, -90], [2190, 1365, -90], [2251, 1365, -90]
];

class CamScene extends HTMLElement {
    constructor() {
        super();
        this.attachShadow({ mode: 'open' });
        const outline = ([l, t, r, b, tl, tr, h]) =>
            `<path d="M${l} ${t}H${tl}v${-h}H${tr}v${h}H${r}V${b}H${tr}v${h}H${tl}v${-h}H${l}z"/>`;
        const barH = y => `<rect x="1713" y="${y}" width="382" height="32" rx="12"/>`;
        const barV = x => `<rect x="${x}" y="1205" width="30" height="382" rx="12"/>`;

        this.shadowRoot.innerHTML = `
            <style>
                :host { display: block; }
                svg { display: block; width: 100%; height: 100%; }
            </style>
            <svg viewBox="112 366 3456 1715" preserveAspectRatio="xMinYMin slice" role="img" aria-label="Sheet layout">
                <defs>
                    <pattern id="minor" x="120" y="503" width="33.66" height="33.66" patternUnits="userSpaceOnUse">
                        <path d="M0 3.5h33.66M3.5 0v33.66" stroke="#5e5673" stroke-width="7"/>
                    </pattern>
                    <pattern id="teal" x="120" y="503" width="33.66" height="33.66" patternUnits="userSpaceOnUse">
                        <path d="M0 0h33.66v33.66H0z" fill="#3e5569"/>
                        <path d="M0 3.5h33.66M3.5 0v33.66" stroke="#485f73" stroke-width="7"/>
                    </pattern>
                    <pattern id="dots" x="120" y="503" width="33.66" height="33.66" patternUnits="userSpaceOnUse">
                        <path d="M0 0h8v8H0z" fill="#536a7d"/>
                    </pattern>
                    <pattern id="major" x="121" y="504" width="168.3" height="168.3" patternUnits="userSpaceOnUse">
                        <path d="M0 1h168.3M1 0v168.3" stroke="#9aa8ba" stroke-opacity=".5" stroke-width="2"/>
                        <path d="M0 3h168.3M3 0v168.3" stroke="#30364c" stroke-opacity=".4" stroke-width="2"/>
                    </pattern>
                </defs>
                <rect x="112" y="366" width="3456" height="1715" fill="#504a68"/>
                <rect x="112" y="366" width="3456" height="1715" fill="url(#minor)"/>

                <clipPath id="dark"><path transform="translate(100 360) scale(.995 1.11)" d="${smooth(DARK_ISLANDS)}"/></clipPath>
                <rect x="112" y="366" width="640" height="1715" fill="url(#teal)" clip-path="url(#dark)"/>
                <path transform="translate(100 360) scale(.995 1.11)" fill="#496073" d="${smooth(ISLANDS)}"/>

                <path fill="#496073" d="M1638 366H2464V2022H1638zM2545 366H3384V2022H2545zM1760 2020h590l40 61h-600zM2706 2022h170l24 59h-190zM3035 2022h190l-18 59h-175z"/>
                <path fill="#496073" d="M3384 366v230l50-10 50-40 84 90v1214h-184v172l40-8 40-50 30-50 74-14v-1434h-184zM3480 366h88v84l-60 24-40-44z"/>
                <path fill="#496073" transform="translate(2400 360) scale(.8163 1.1926)" d="${smooth(EAST_ISLANDS)}"/>
                <path fill="url(#dots)" d="M1638 366H2464V2022H1638zM2556 366H3384V2022H2556z"/>
                <rect x="112" y="366" width="3456" height="1715" fill="url(#major)"/>

                <g fill="none" stroke="#c4dce8" stroke-width="3">
                    <rect x="1638" y="378" width="821" height="1641"/>
                    <rect x="1689" y="429" width="718" height="1538"/>
                </g>
                <g fill="none" stroke="#90a9b9" stroke-width="2">
                    <rect x="2558" y="377" width="821" height="1642"/>
                    <rect x="2609" y="429" width="718" height="1538"/>
                </g>

                <g fill="#b2b2b2" stroke="#3b7cb0" stroke-width="3">
                    ${PARTS.map(outline).join('')}
                    <path d="M1717 1201h325v49h9v43h-9v57h-325v-57h-9v-43h9z"/>
                    ${[1391, 1447, 1505].map(barH).join('')}
                    ${[2141, 2196, 2256].map(barV).join('')}
                </g>
                <path d="M1938 570V740M2142 470V600M2196 1240V1550" stroke="#a08be0" stroke-width="3"/>
                <g fill="#4458a0">
                    ${[1388, 1444, 1502].map(y => `<path d="M1729 ${y}h15v20h-15zM2065 ${y}h15v20h-15z"/>`).join('')}
                    ${[2138, 2193, 2252].map(x => `<path d="M${x} 1222h20v11h-20zM${x} 1558h20v11h-20z"/>`).join('')}
                </g>
                <g fill="#788da0" fill-opacity=".8">
                    ${ARROWS.map(([x, y, a]) => `<path transform="translate(${x} ${y}) rotate(${a})" d="M0 0l-20-10v7h-46v6h46v7z"/>`).join('')}
                </g>

                <path d="M1704 1588V1494" stroke="#00f000" stroke-width="5"/><path d="M1704 1476l-7 24h14z" fill="#00f000"/>
                <path d="M1704 1588h92" stroke="#f5002a" stroke-width="5"/><path d="M1810 1588l-20-7v14z" fill="#f5002a"/>
                <path d="M1698 1580h12v17h-12z" fill="#1212e0"/>
                <g font-size="22" font-weight="600" text-anchor="middle">
                    <text x="1704" y="1453" fill="#25c646">Y</text>
                    <text x="1848" y="1596" fill="#d81c48">X</text>
                </g>
                <g fill="#fafafa" stroke="#59636d" stroke-width="2">
                    ${HANDLES.map(([x, y]) => `<circle cx="${x}" cy="${y}" r="7"/>`).join('')}
                </g>
                <circle cx="1638" cy="2016" r="9" fill="#281d6c"/><circle cx="1638" cy="2018" r="4" fill="#8d86e0"/>
            </svg>
        `;
    }
}

class PanelBar extends HTMLElement {
    constructor() {
        super();
        this.attachShadow({ mode: 'open' });
    }

    connectedCallback() {
        const start = this.getAttribute('start');
        this.shadowRoot.innerHTML = `
            <style>
                :host { display: flex; align-items: center; box-sizing: border-box; width: 600px; height: 49px; padding: 0 20px 2px 8px; background: #f1f1f1; border: 2px solid #fafafa; color: #555; box-shadow: 0 0 0 5px #5c5c5c; --icon: 22px; }
                .start { width: 40px; }
                .title { flex: 1; }
                button { padding: 0; border: 0; background: none; }
            </style>
            <div class="start">${start ? `<button aria-label="Collapse"><fx-icon name="${start}"></fx-icon></button>` : ''}</div>
            <div class="title"><slot></slot></div>
            <button aria-label="Toggle"><fx-icon name="${this.getAttribute('end')}"></fx-icon></button>
        `;
    }
}

class TreeItem extends HTMLElement {
    constructor() {
        super();
        this.attachShadow({ mode: 'open' });
    }

    connectedCallback() {
        const icons = this.getAttribute('icons').split(' ');
        const state = this.getAttribute('state');
        this.style.setProperty('--level', this.getAttribute('level'));
        this.shadowRoot.innerHTML = `
            <style>
                :host { display: flex; align-items: center; gap: 14px; padding-left: calc(var(--level) * 36px); font-size: 23px; }
                button { padding: 0; border: 0; background: none; }
                .twist { width: 18px; --icon: 16px; }
                .box { display: flex; align-items: center; gap: 18px; height: 40px; padding: 0 20px 0 6px; background: #f3f3f3; box-shadow: inset 0 2px #fff, 3px 4px 0 #5c5c5c; }
                .label { margin-left: 11px; padding-bottom: 2px; color: #303030; }
                :host([near]) .label { margin-left: 2px; }
                :host([bold]) .label { margin-left: 10px; font-weight: 700; }
                :host([bold]) .box { gap: 16px; }
                :host([active]) .box { gap: 16px; padding-right: 10px; }
                :host([active]) .label { margin: 0 -8px; padding: 2px 16px; background: #959595; color: #fff; font-weight: 700; }
            </style>
            <div class="twist">${state ? `<button aria-label="Expand"><fx-icon name="${state}"></fx-icon></button>` : ''}</div>
            <div class="box">
                ${icons.map(name => `<fx-icon name="${name}"></fx-icon>`).join('')}
                <span class="label"><slot></slot></span>
                ${this.hasAttribute('active') ? '<fx-icon name="target"></fx-icon>' : ''}
            </div>
        `;
    }
}

class BrowserTree extends HTMLElement {
    constructor() {
        super();
        this.attachShadow({ mode: 'open' });
        this.shadowRoot.innerHTML = `
            <style>
                :host { display: block; }
                .items { display: flex; flex-direction: column; gap: 8px; padding: 11px 0 0 40px; }
            </style>
            <panel-bar start="rewind" end="minusDot">BROWSER</panel-bar>
            <div class="items">
                <tree-item level="0" state="open" icons="eye part">fin layout_cnc v5</tree-item>
                <tree-item level="1" icons="units">Units: mm</tree-item>
                <tree-item level="1" state="shut" icons="folder">Named Views</tree-item>
                <tree-item level="1" state="shut" icons="eyeOff folder">Origin</tree-item>
                <tree-item level="1" state="shut" icons="eye part">Models</tree-item>
                <tree-item level="1" state="open" icons="ncprog">NC Programs</tree-item>
                <tree-item level="2" icons="error ncprog">NCProgram2</tree-item>
                <tree-item level="1" state="open" icons="eye setups" near>Setups</tree-item>
                <tree-item level="2" state="open" icons="eye wedge setupOn" active>Setup5</tree-item>
                <tree-item level="3" state="shut" icons="eyeOff regen layers" bold>[T1] 2D Contour5</tree-item>
            </div>
        `;
    }
}

class NavBar extends HTMLElement {
    constructor() {
        super();
        this.attachShadow({ mode: 'open' });
        const items = ['orbit*', 'lookAt', 'pan', 'zoom', 'fit*', 'display*', 'gridSet*', 'views*', 'path*', 'cycle*', 'stock*', 'machine*', 'screw*', 'holder*'];
        this.shadowRoot.innerHTML = `
            <style>
                :host { display: flex; gap: 7px; align-items: center; box-sizing: border-box; height: 48px; padding: 0 6px 2px 7px; background: #f3f3f3; box-shadow: inset 0 -3px #fff, 0 0 0 4px #5c5c5c; --icon: 31px; }
                button { display: flex; align-items: center; gap: 10px; width: 46px; padding: 0; border: 0; background: none; }
                .drop { width: 55px; }
                .caret { --icon: 13px; }
            </style>
            ${items.map(item => {
                const name = item.replace('*', '');
                return name === item
                    ? `<button aria-label="${name}"><fx-icon name="${name}"></fx-icon></button>`
                    : `<button class="drop" aria-label="${name}"><fx-icon name="${name}"></fx-icon><fx-icon class="caret" name="caret"></fx-icon></button>`;
            }).join('')}
        `;
    }
}

class ViewCube extends HTMLElement {
    constructor() {
        super();
        this.attachShadow({ mode: 'open' });
        this.shadowRoot.innerHTML = `
            <style>
                :host { display: block; width: 160px; height: 160px; }
                svg { display: block; overflow: visible; }
            </style>
            <svg viewBox="-10 -10 160 160" role="img" aria-label="View cube" font-size="24">
                <path d="M7 34v96" stroke="#3da09a" stroke-width="2"/>
                <path d="M12 28h104v104H12z" fill="#9a9a9a" stroke="#b4b2c4" stroke-width="2"/>
                <path d="M118 30v104H14" fill="none" stroke="#55506a" stroke-width="3"/>
                <path d="M32 52h46v22H50v20H32z" fill="#9893ae"/>
                <text x="64" y="88" text-anchor="middle" font-weight="600" fill="#66666c">TOP</text>
                <text x="20" y="18" text-anchor="middle" font-weight="700" fill="#1fa548">Y</text>
                <text x="8" y="145" text-anchor="middle" font-weight="700" fill="#2330d8">Z</text>
                <text x="134" y="132" text-anchor="middle" font-weight="700" fill="#bb2450">X</text>
            </svg>
        `;
    }
}

class ContourDialog extends HTMLElement {
    constructor() {
        super();
        this.attachShadow({ mode: 'open' });
        const tabs = ['bolt', 'axis', 'solids', 'heights', 'passes', 'linking'];
        this.shadowRoot.innerHTML = `
            <style>
                :host { display: block; width: 499px; background: #f1f1f1; box-shadow: 0 0 0 3px #5c5c5c, 8px 3px 0 2px #5f5f5f; color: #303030; font-size: 23px; }
                button, input, select { box-sizing: border-box; font: inherit; color: inherit; }
                button { display: flex; align-items: center; justify-content: center; padding: 0; border: 0; background: none; }
                header { display: flex; align-items: center; gap: 8px; height: 45px; padding: 0 10px 0 23px; border-bottom: 2px solid #c8c8c8; color: #555; --icon: 19px; }
                header span { flex: 1; }
                .strip { display: flex; height: 55px; box-shadow: inset 0 -2px #bdbdbd; }
                .strip button { width: 58px; margin-top: 8px; border-right: 2px solid #d0d0d0; }
                .strip .active { margin-top: 5px; border: 2px solid #bdbdbd; border-bottom: 0; background: #f1f1f1; }
                section { margin-right: 24px; border-bottom: 2px solid #c6c6c6; }
                h2 { display: flex; align-items: center; gap: 13px; height: 62px; margin: 0; padding-left: 19px; font-size: 23px; font-weight: 600; --icon: 17px; }
                .geometry { padding: 5px 0 18px; }
                .tabs { padding: 6px 0 10px; }
                .row { display: grid; grid-template-columns: 215px 194px; align-items: center; height: 62px; padding-left: 25px; }
                .pick { display: flex; align-items: center; gap: 16px; --icon: 26px; }
                .pick .select { gap: 8px; width: 120px; height: 54px; border: 2px solid #c8c8c8; background: #fdfdfd; }
                .pick .points { gap: 10px; width: 136px; height: 54px; background: #0a96d6; color: #fff; font-weight: 600; }
                .pick .clear { width: 30px; --icon: 19px; }
                .list { box-sizing: border-box; height: 286px; margin: 12px 0 0 18px; width: 417px; background: #fff; border: 2px solid #c8c8c8; }
                .scroll { display: flex; justify-content: space-between; height: 218px; }
                ul { margin: 0; padding: 0; list-style: none; }
                li { display: flex; align-items: center; gap: 14px; box-sizing: border-box; height: 54px; padding: 0 0 4px 20px; }
                .track { width: 13px; background: #ccc; }
                .thumb { height: 114px; border-radius: 7px; background: #989898; }
                .actions { display: flex; gap: 20px; align-items: center; height: 62px; padding-left: 12px; }
                .actions button { width: 32px; }
                .actions .small { --icon: 18px; }
                input[type=text], .field { width: 194px; height: 54px; border: 2px solid #c8c8c8; background: #fff; }
                input[type=text] { padding: 0 6px; }
                .field { display: flex; align-items: center; box-sizing: border-box; padding-left: 8px; --icon: 30px; }
                .field select { flex: 1; min-width: 0; padding: 0 0 0 8px; border: 0; background: none; appearance: none; }
                .field .arrow { --icon: 13px; margin-right: 8px; }
                .spin { padding-left: 0; }
                .spin input { flex: 1; min-width: 0; height: 100%; padding: 0 6px; border: 0; background: none; appearance: textfield; }
                .spin input::-webkit-inner-spin-button { display: none; }
                .steps { display: flex; flex-direction: column; justify-content: space-evenly; width: 28px; height: 100%; background: #e6e6e6; --icon: 10px; }
                .up { transform: rotate(180deg); }
                input[type=checkbox] { display: grid; place-items: center; flex: none; appearance: none; width: 26px; height: 26px; margin: 0; border: 2px solid #555; border-radius: 5px; background: linear-gradient(#fff, #c9c9c9); }
                input[type=checkbox]:checked { background: linear-gradient(#ccc, #f4f4f4); }
                input[type=checkbox]:checked::after { content: ""; width: 5px; height: 13px; margin-bottom: 4px; border: solid #111; border-width: 0 3px 3px 0; transform: rotate(40deg); }
                h2 input { margin-left: 3px; }
                .single { display: flex; align-items: center; gap: 13px; height: 79px; padding-left: 21px; font-weight: 600; }
                .last { height: 74px; margin-right: 0; }
                footer { display: flex; align-items: center; justify-content: flex-end; gap: 36px; height: 70px; padding: 0 24px 0 29px; --icon: 25px; }
                footer fx-icon { margin-right: auto; }
                footer button { width: 120px; height: 40px; border: 2px solid #bdbdbd; background: #e6e6e6; color: #555; }
            </style>
            <header>
                <fx-icon name="minusDot"></fx-icon><span>2D CONTOUR : 2D CONTOUR5</span><fx-icon name="forward"></fx-icon>
            </header>
            <div class="strip">
                ${tabs.map(name => `<button class="${name === 'solids' ? 'active' : ''}" aria-label="${name}"><fx-icon name="${name}"></fx-icon></button>`).join('')}
            </div>
            <section class="geometry">
                <h2><fx-icon name="caret"></fx-icon>Geometry</h2>
                <div class="row">
                    <label for="selection">Contour Selection</label>
                    <div class="pick">
                        <button class="select" id="selection"><fx-icon name="pointer"></fx-icon>Select</button>
                        <button class="clear" aria-label="Clear contours"><fx-icon name="close"></fx-icon></button>
                    </div>
                </div>
                <div class="list">
                    <div class="scroll">
                        <ul>${[1, 2, 3, 4].map(n => `<li><fx-icon name="chain"></fx-icon>Closed Chain ${n}</li>`).join('')}</ul>
                        <div class="track"><div class="thumb"></div></div>
                    </div>
                    <div class="actions">
                        <button aria-label="Add pocket"><fx-icon name="pocket"></fx-icon></button>
                        <button aria-label="Add closed chain"><fx-icon name="chain"></fx-icon></button>
                        <button aria-label="Add open chain"><fx-icon name="chains"></fx-icon></button>
                        <button class="small" aria-label="More"><fx-icon name="caret"></fx-icon></button>
                        <button class="small" aria-label="Remove"><fx-icon name="close"></fx-icon></button>
                        <button aria-label="Settings"><fx-icon name="gear"></fx-icon></button>
                    </div>
                </div>
            </section>
            <section class="tabs">
                <h2><fx-icon name="caret"></fx-icon><input type="checkbox" id="tabs" checked><label for="tabs">Tabs</label></h2>
                <div class="row">
                    <label for="shape">Tab Shape</label>
                    <div class="field"><fx-icon name="rectTab"></fx-icon><select id="shape"><option>Rectangu...</option></select><fx-icon class="arrow" name="caret"></fx-icon></div>
                </div>
                <div class="row"><label for="width">Tab Width</label><input type="text" id="width" value="6 mm"></div>
                <div class="row"><label for="height">Tab Height</label><input type="text" id="height" value="1.5 mm"></div>
                <div class="row">
                    <label for="positioning">Tab Positioning</label>
                    <div class="field"><fx-icon name="count"></fx-icon><select id="positioning"><option>Number c...</option></select><fx-icon class="arrow" name="caret"></fx-icon></div>
                </div>
                <div class="row">
                    <label for="count">Tabs per Contour</label>
                    <div class="field spin">
                        <input type="number" id="count" value="0">
                        <div class="steps">
                            <button class="up" aria-label="Increase"><fx-icon name="caret"></fx-icon></button>
                            <button class="down" aria-label="Decrease"><fx-icon name="caret"></fx-icon></button>
                        </div>
                    </div>
                </div>
                <div class="row">
                    <label for="manual">Manual Tabs</label>
                    <div class="pick">
                        <button class="points" id="manual"><fx-icon name="pointer"></fx-icon>4 Poir...</button>
                        <button class="clear" aria-label="Clear points"><fx-icon name="close"></fx-icon></button>
                    </div>
                </div>
            </section>
            <section class="single"><input type="checkbox" id="rest"><label for="rest">Rest Machining</label></section>
            <section class="single last"><input type="checkbox" id="stock"><label for="stock">Stock Contours</label></section>
            <footer>
                <fx-icon name="info"></fx-icon>
                <button>OK</button>
                <button>Cancel</button>
            </footer>
        `;

        this.count = this.shadowRoot.querySelector('#count');
        this.shadowRoot.querySelector('.up').addEventListener('click', () => this.count.stepUp());
        this.shadowRoot.querySelector('.down').addEventListener('click', () => this.count.stepDown());
    }
}

class WorkArea extends HTMLElement {
    constructor() {
        super();
        this.attachShadow({ mode: 'open' });
        this.shadowRoot.innerHTML = `
            <style>
                :host { display: block; position: relative; overflow: hidden; }
                cam-scene { position: absolute; inset: 0; }
                .over { position: absolute; inset: 0; display: grid; grid-template-columns: 1fr auto 1fr; }
                .left { display: flex; flex-direction: column; justify-content: space-between; padding: 8px 0 10px 8px; }
                nav-bar { align-self: end; margin-bottom: 12px; }
                .right { display: flex; flex-direction: column; align-items: flex-end; padding: 38px 8px 9px 0; }
                view-cube { margin: 0 34px 50px 0; }
                .badge { width: 34px; height: 34px; margin: auto 18px 0 0; }
            </style>
            <cam-scene></cam-scene>
            <div class="over">
                <div class="left">
                    <browser-tree></browser-tree>
                    <panel-bar end="plusDot">COMMENTS</panel-bar>
                </div>
                <nav-bar></nav-bar>
                <div class="right">
                    <view-cube></view-cube>
                    <contour-dialog></contour-dialog>
                    <svg class="badge" viewBox="0 0 34 34" aria-hidden="true">
                        <path d="M17 0a17 17 0 0 1 17 17v15H17A17 17 0 0 1 17 0z"/>
                        <path d="M8 22l11-9M14 23l12-12M22 23l4-5" stroke="#fff" stroke-width="2"/>
                    </svg>
                </div>
            </div>
        `;
    }
}

class FusionApp extends HTMLElement {
    constructor() {
        super();
        this.attachShadow({ mode: 'open' });
        this.shadowRoot.innerHTML = `
            <style>
                :host { display: flex; box-sizing: border-box; height: 100vh; padding: 75px 112px 149px; overflow: hidden; }
                .window { flex: 1; min-width: 0; display: flex; flex-direction: column; border-radius: 22px; overflow: hidden; box-shadow: 0 0 0 1px #c4c4c4, 0 30px 60px 10px rgba(0, 0, 0, .34), 0 4px 50px 10px rgba(0, 0, 0, .16); }
                work-area { flex: 1; }
            </style>
            <div class="window">
                <title-bar>fin layout_cnc v6* (Morningstars) - Autodesk Fusion (Education License)</title-bar>
                <doc-bar></doc-bar>
                <ribbon-bar></ribbon-bar>
                <work-area></work-area>
            </div>
        `;
    }
}

customElements.define('fx-icon', FxIcon);
customElements.define('title-bar', TitleBar);
customElements.define('doc-bar', DocBar);
customElements.define('ribbon-group', RibbonGroup);
customElements.define('ribbon-bar', RibbonBar);
customElements.define('cam-scene', CamScene);
customElements.define('panel-bar', PanelBar);
customElements.define('tree-item', TreeItem);
customElements.define('browser-tree', BrowserTree);
customElements.define('nav-bar', NavBar);
customElements.define('view-cube', ViewCube);
customElements.define('contour-dialog', ContourDialog);
customElements.define('work-area', WorkArea);
customElements.define('fusion-app', FusionApp);
</script>
</body>
</html>
